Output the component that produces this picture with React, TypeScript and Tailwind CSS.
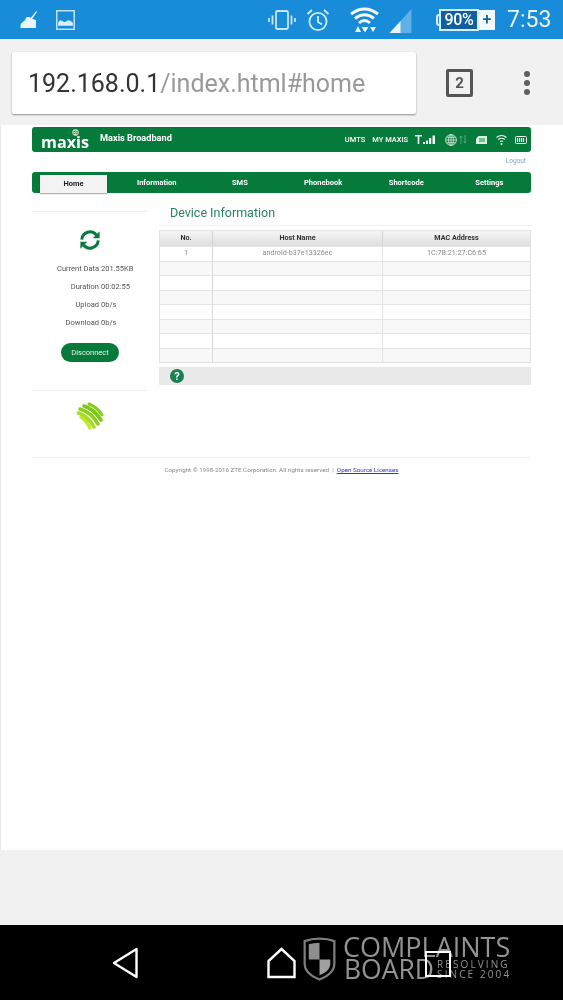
import React from "react";

const Status = () => (
  <div className="flex h-[39px] items-center bg-[#188bd9] text-white [font-family:Roboto,sans-serif]">
    <svg width="17" height="20" viewBox="0 0 16 18" className="ml-[20px]" fill="#e8f5fd">
      <path d="M15.5 0.5 16 1.5 11 8.5 9.5 7.5Z" />
      <path d="M6 6.5 Q9 5.5 12 8 L15 9 V16.5 H0.5 Q0 12 2.5 11 Q5 10 6 6.5Z" />
    </svg>
    <svg width="19" height="20" viewBox="0 0 18 19" className="ml-[19px]" fill="none">
      <rect x="0.7" y="0.7" width="16.6" height="17.6" stroke="#bfe3fa" strokeWidth="1.4" />
      <path d="M2 15V12Q4 8.5 6 10.5T10 10.5T16 12V15Z" fill="#d8effd" />
    </svg>
    <svg width="28" height="22" viewBox="0 0 28 22" className="ml-[193px]" fill="none" stroke="#c7e7fb" strokeWidth="1.8">
      <rect x="8" y="2" width="12" height="18" rx="1.5" />
      <path d="M4.5 6.5V15.5M1 9V13M23.5 6.5V15.5M27 9V13" />
    </svg>
    <svg width="24" height="24" viewBox="0 0 24 24" className="ml-[10px]" fill="none" stroke="#d3ecfb" strokeWidth="1.8">
      <circle cx="12" cy="13.5" r="8.6" />
      <path d="M12 8V14L16 16.5M1.5 6 6 2M22.5 6 18 2" />
    </svg>
    <svg width="31" height="29" viewBox="0 0 29 29" className="ml-[19px]" fill="none">
      <path d="M1 9Q14.5 -1 28 9" stroke="#f2fafe" strokeWidth="3" />
      <path d="M5 13.5Q14.5 6 24 13.5" stroke="#f2fafe" strokeWidth="3" />
      <path d="M9 18Q14.5 13 20 18" stroke="#f2fafe" strokeWidth="3" />
      <path d="M5 27 8 21 11 27ZM11.5 22H18.5L15 27.5ZM23 27 26 22H20Z" fill="#f2fafe" />
    </svg>
    <svg width="23" height="24" viewBox="0 0 20 22" className="ml-[9px] mt-[3px]">
      <path d="M0 22 20 0V22Z" fill="#5fb0e6" />
      <path d="M0 22 10 11V22Z" fill="#e8f5fd" />
    </svg>
    <div className="ml-[24px] flex h-[22px] items-center">
      <div className="h-[12px] w-[3px] rounded-l-sm border-y-2 border-l-2 border-[#d5eefc]" />
      <div className="flex h-[22px] w-[40px] items-center justify-center border-2 border-[#d5eefc] bg-[#125f9d] text-[16px] font-medium leading-none tracking-[-0.3px]">
        90%
      </div>
      <div className="flex h-[20px] w-[16px] items-center justify-center bg-[#f3fafe] text-[16px] font-medium leading-none text-[#125f9d]">
        +
      </div>
    </div>
    <span className="ml-[12px] text-[23px] leading-none text-[#eaf6fd]">7:53</span>
  </div>
);

const Toolbar = () => (
  <div className="flex h-[86px] items-start bg-[#f1f1f1] [font-family:Roboto,sans-serif]">
    <div className="ml-[12px] mt-[13px] flex h-[62px] w-[404px] items-center rounded-[2px] bg-white pl-[16px] text-[25px] leading-none shadow-[0_1px_2px_rgba(0,0,0,0.4)]">
      <span className="text-[#333333]">192.168.0.1</span>
      <span className="text-[#999999]">/index.html#home</span>
    </div>
    <div className="ml-[30px] mt-[30px] flex h-[28px] w-[27px] items-center justify-center rounded-[2px] border-[3px] border-[#555555] text-[15px] font-bold leading-none text-[#555555]">
      2
    </div>
    <div className="ml-[51px] mt-[32px] flex flex-col gap-[3px]">
      <div className="size-[6px] rounded-full bg-[#5f5f5f]" />
      <div className="size-[6px] rounded-full bg-[#5f5f5f]" />
      <div className="size-[6px] rounded-full bg-[#5f5f5f]" />
    </div>
  </div>
);

const Header = () => (
  <div className="flex h-[25px] items-center rounded-[3px] bg-[#067a3a] text-white">
    <div className="relative ml-[9px] w-[50px] pt-[5px] [font-family:'Open_Sans',sans-serif] text-[16.2px] font-bold leading-[20px]">
      maxis
      <svg width="7" height="7" viewBox="0 0 7 7" className="absolute left-[31px] top-[2px]">
        <circle cx="3.5" cy="3.5" r="3.2" fill="#cfe8c8" />
        <path d="M1 3Q3.5 1 6 3M1 5Q3.5 3 6 5" stroke="#067a3a" strokeWidth="0.8" fill="none" />
      </svg>
    </div>
    <span className="mb-[3px] ml-[9px] text-[9.2px] font-bold">Maxis Broadband</span>
    <span className="ml-[173px] text-[7.5px] font-medium">UMTS</span>
    <span className="ml-[7px] text-[7.5px] font-medium">MY MAXIS</span>
    <svg width="21" height="10" viewBox="0 0 21 10" className="ml-[7px]" fill="#f1f8f3">
      <path d="M0 0H7V1.5H4.3V9H2.7V1.5H0Z" />
      <rect x="8" y="7" width="2" height="2" />
      <rect x="11" y="5.5" width="2" height="3.5" />
      <rect x="14" y="3" width="2.2" height="6" />
      <rect x="17.5" y="0.5" width="2.5" height="8.5" />
    </svg>
    <svg width="12" height="12" viewBox="0 0 12 12" className="ml-[9px]" fill="none" stroke="#d9eee0" strokeWidth="0.8">
      <circle cx="6" cy="6" r="5.4" />
      <ellipse cx="6" cy="6" rx="2.4" ry="5.4" />
      <path d="M6 .6V11.4M.6 6H11.4M1.4 3.3H10.6M1.4 8.7H10.6" />
    </svg>
    <svg width="8" height="9" viewBox="0 0 8 9" className="ml-[2px]" fill="none" stroke="#53a877" strokeWidth="1">
      <path d="M2 9V1M0.5 2.5 2 1 3.5 2.5M6 0V8M4.5 6.5 6 8 7.5 6.5" />
    </svg>
    <svg width="11" height="8" viewBox="0 0 11 8" className="ml-[9px]">
      <path d="M2.5 0H11V8H0V2.5Z" fill="#d9f0de" />
      <rect x="3" y="2" width="6" height="4" fill="#73c58f" />
    </svg>
    <svg width="11" height="12" viewBox="0 0 11 12" className="ml-[9px]" fill="none" stroke="#f1f8f3" strokeWidth="1.2">
      <path d="M.5 3.5Q5.5 -.5 10.5 3.5M2.2 5.5Q5.5 3 8.8 5.5M4 7.5Q5.5 6.5 7 7.5" />
      <circle cx="5.5" cy="10" r="1" fill="#f1f8f3" stroke="none" />
    </svg>
    <svg width="12" height="8" viewBox="0 0 12 8" className="ml-[8px]">
      <rect x="0.5" y="0.5" width="11" height="7" rx="1" fill="#067a3a" stroke="#f1f8f3" />
      <path d="M2.5 2V6M4.5 2V6M6.5 2V6M8.5 2V6" stroke="#f1f8f3" strokeWidth="1.2" />
    </svg>
  </div>
);

const Nav = () => (
  <div className="grid h-[21px] grid-cols-6 rounded-[3px] bg-[#067a3a] text-[7.5px] font-bold text-white">
    <div className="ml-[8px] mr-[8px] mt-[3px] flex items-center justify-center bg-[#f3f3f3] text-[#222222] shadow-[0_1px_1px_rgba(0,0,0,0.3)]">
      Home
    </div>
    {["Information", "SMS", "Phonebook", "Shortcode", "Settings"].map((t) => (
      <div key={t} className="flex items-center justify-center">
        {t}
      </div>
    ))}
  </div>
);

const Side = () => (
  <div className="mt-[6px] w-[116px] shrink-0 text-[7.5px] text-[#555555]">
    <div className="flex h-[180px] flex-col items-center border-y border-[#eeeeee] pt-[17px]">
      <svg width="22" height="22" viewBox="0 0 24 24" fill="none" stroke="#0b7a41" strokeWidth="3.2">
        <path d="M3 11.5A9 9 0 0 1 19 6.5" />
        <path d="M21 12.5A9 9 0 0 1 5 17.5" />
        <path d="M22.5 2.5V10H15Z" fill="#0b7a41" stroke="none" />
        <path d="M1.5 21.5V14H9Z" fill="#0b7a41" stroke="none" />
      </svg>
      <div className="mt-[13px] grid w-full grid-cols-[67px_1fr] gap-x-[2px] gap-y-[8px] leading-[10px]">
        <span className="text-right">Current Data</span>
        <span>201.55KB</span>
        <span className="text-right">Duration</span>
        <span>00:02:55</span>
        <span className="text-right">Upload</span>
        <span>0b/s</span>
        <span className="text-right">Download</span>
        <span>0b/s</span>
      </div>
      <div className="mt-[15px] flex h-[19px] w-[58px] items-center justify-center rounded-full bg-[#067a3a] text-[#e8f5ec]">
        Disconnect
      </div>
    </div>
    <div className="mt-[11px] flex justify-center">
      <svg width="28" height="28" viewBox="0 0 28 28" fill="none" strokeLinecap="round">
        <path d="M5 15Q10 18 14 26" stroke="#c4e82e" strokeWidth="3.4" />
        <path d="M2.5 11Q12 14 18 25" stroke="#a8dc24" strokeWidth="3.6" />
        <path d="M4 7Q15 10 22 22" stroke="#8cd01e" strokeWidth="3.6" />
        <path d="M8 4Q18 7 25 18" stroke="#7ac81a" strokeWidth="3.6" />
        <path d="M13 2Q21 5 26 13" stroke="#86cc1e" strokeWidth="3" />
      </svg>
    </div>
  </div>
);

const rows = [
  ["1", "android-b37e13326ec", "1C:7B:21:27:C6:65"],
  ["", "", ""],
  ["", "", ""],
  ["", "", ""],
  ["", "", ""],
  ["", "", ""],
  ["", "", ""],
  ["", "", ""],
];

const Main = () => (
  <div className="ml-[11px] w-[372px]">
    <div className="h-[21px] border-b border-[#eeeeee] pl-[11px] text-[12.5px] leading-[15px] text-[#2b8060]">
      Device Information
    </div>
    <div className="mt-[4px] border border-[#e3e3e3] text-[7.2px] text-[#8a8a8a]">
      <div className="grid h-[15px] grid-cols-[52px_170px_1fr] bg-gradient-to-b from-[#f5f5f5] to-[#dedede] font-bold text-[#333333]">
        <div className="flex items-center justify-center">No.</div>
        <div className="flex items-center justify-center border-l border-[#d5d5d5]">Host Name</div>
        <div className="flex items-center justify-center border-l border-[#d5d5d5]">MAC Address</div>
      </div>
      {rows.map((r, i) => (
        <div
          key={i}
          className={`grid h-[14.5px] grid-cols-[52px_170px_1fr] border-t border-[#e3e3e3] ${i % 2 ? "bg-[#f8f8f8]" : "bg-white"}`}
        >
          <div className="flex items-center justify-center">{r[0]}</div>
          <div className="flex items-center justify-center border-l border-[#d8d8d8]">{r[1]}</div>
          <div className="flex items-center justify-center border-l border-[#e3e3e3]">{r[2]}</div>
        </div>
      ))}
    </div>
    <div className="mt-[4px] flex h-[18px] items-center rounded-[1px] bg-[#e9e9e9] pl-[11px]">
      <div className="flex size-[14px] items-center justify-center rounded-full bg-[#1a8050] text-[11px] font-bold leading-none text-white">
        ?
      </div>
    </div>
  </div>
);

const Page = () => (
  <div className="h-[725px] border-l border-[#e6e6e6] bg-white pt-[2px] [font-family:Roboto,sans-serif]">
    <div className="ml-[31px] w-[499px]">
      <Header />
      <div className="h-[20px] pr-[5px] pt-[5px] text-right text-[6.5px] leading-[8px] text-[#7fa8cf]">Logout</div>
      <Nav />
      <div className="mt-[12px] flex">
        <Side />
        <Main />
      </div>
      <div className="mt-[27px] border-t border-[#eeeeee] pt-[8px] text-center text-[6.25px] leading-[8px] text-[#888888]">
        Copyright © 1998-2016 ZTE Corporation. All rights reserved &nbsp;|&nbsp; <span className="text-[#3333bb] underline">Open Source Licenses</span>
      </div>
    </div>
  </div>
);

const BottomNav = () => (
  <div className="relative flex h-[75px] items-center bg-black">
    <svg width="26" height="32" viewBox="0 0 26 32" className="ml-[112px]" fill="none" stroke="#ffffff" strokeWidth="2.4" strokeLinejoin="round">
      <path d="M24.5 2V30L2 16Z" />
    </svg>
    <svg width="31" height="32" viewBox="0 0 30 32" className="ml-[128px]" fill="none" stroke="#ffffff" strokeWidth="2.4">
      <path d="M2 30V14L15 2L28 14V30Z" />
    </svg>
    <div className="absolute left-[302px] top-[10px] flex text-[#939393] [font-family:'Open_Sans',sans-serif]">
      <svg width="35" height="44" viewBox="0 0 32 43" className="mt-[2px]" fill="none">
        <path d="M16 1.5Q24 1.5 30.5 4V26Q30.5 36 16 41.5Q1.5 36 1.5 26V4Q8 1.5 16 1.5Z" stroke="#7d7d7d" strokeWidth="2.2" />
        <path d="M5.5 7Q10 5.5 16 5.5V22H5.5Z" fill="#8e8e8e" />
        <path d="M16 22H26.5V27Q26 33 16 37.5Z" fill="#a0a0a0" />
      </svg>
      <div className="ml-[6px] flex flex-col">
        <span className="text-[27px] font-medium leading-[23px]">COMPLAINTS</span>
        <div className="flex">
          <span className="ml-[1px] text-[26.5px] font-medium leading-[22px]">BOARD</span>
          <span className="ml-[3px] mt-[1px] text-[10px] leading-[10px] tracking-[2.1px]">
            RESOLVING
            <br />
            SINCE 2004
          </span>
        </div>
      </div>
    </div>
    <div className="relative ml-[128px] mt-[2px] size-[26px] border-[2.5px] border-white" />
  </div>
);

export default function App() {
  return (
    <div className="w-[563px] blur-[0.3px]">
      <Status />
      <Toolbar />
      <Page />
      <div className="h-[75px] bg-[#f1f1f1]" />
      <BottomNav />
    </div>
  );
}
